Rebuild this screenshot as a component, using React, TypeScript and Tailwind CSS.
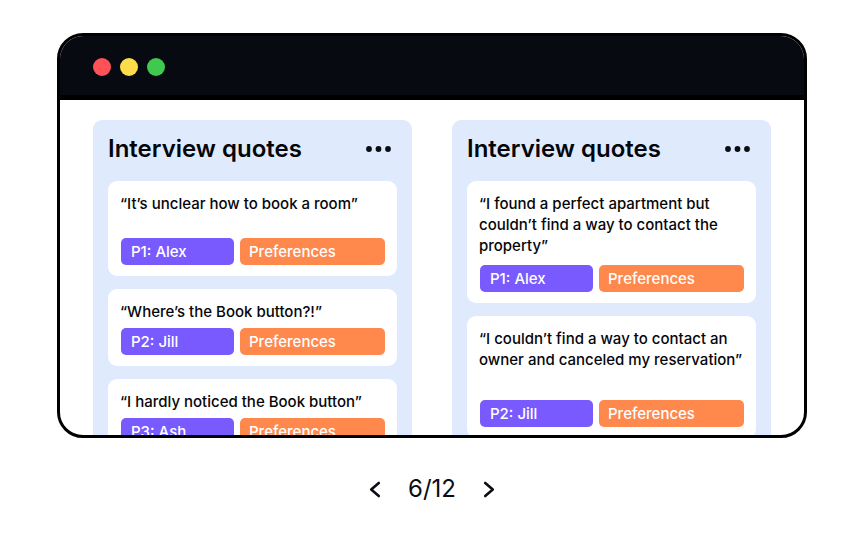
const font = { fontFamily: "Inter, 'Noto Sans', sans-serif" };

interface Quote {
  text: string;
  person: string;
  gap: string;
}

const leftQuotes: Quote[] = [
  { text: "“It’s unclear how to book a room”", person: "P1: Alex", gap: "mt-[24px]" },
  { text: "“Where’s the Book button?!”", person: "P2: Jill", gap: "mt-[6px]" },
  { text: "“I hardly noticed the Book button”", person: "P3: Ash", gap: "mt-[6px]" },
];

const rightQuotes: Quote[] = [
  {
    text: "“I found a perfect apartment but couldn’t find a way to contact the property”",
    person: "P1: Alex",
    gap: "mt-[9px]",
  },
  {
    text: "“I couldn’t find a way to contact an owner and canceled my reservation”",
    person: "P2: Jill",
    gap: "mt-[30px]",
  },
];

function Dots() {
  return (
    <svg width="25" height="6" viewBox="0 0 25 6" className="text-[#0b0d14]">
      <circle cx="3" cy="3" r="2.9" fill="currentColor" />
      <circle cx="12.5" cy="3" r="2.9" fill="currentColor" />
      <circle cx="22" cy="3" r="2.9" fill="currentColor" />
    </svg>
  );
}

function QuoteCard({ quote }: { quote: Quote }) {
  return (
    <div className="bg-white rounded-[9px] pt-[12px] pb-[11px] pl-3 pr-[10px] shrink-0">
      <p className="text-[15px] leading-[21px] font-medium text-[#05060a]">{quote.text}</p>
      <div className={`flex gap-[6px] ${quote.gap} pl-px pr-[2px]`}>
        <span className="w-[113px] h-[27px] rounded-[5px] bg-[#785aff] text-white text-[15px] font-medium leading-[27px] px-[10px]">
          {quote.person}
        </span>
        <span className="flex-1 h-[27px] rounded-[5px] bg-[#ff884d] text-white text-[15px] font-medium leading-[27px] px-[9px]">
          Preferences
        </span>
      </div>
    </div>
  );
}

function Column({ quotes }: { quotes: Quote[] }) {
  return (
    <div className="w-[319px] h-[360px] bg-[#dfebfd] rounded-[9px] px-[15px] pt-[14px] flex flex-col">
      <div className="flex items-center justify-between h-[30px] pr-[6px]">
        <h2 className="text-[24px] font-semibold text-[#05060a]">Interview quotes</h2>
        <Dots />
      </div>
      <div className="flex flex-col gap-[13px] mt-[17px]">
        {quotes.map((q) => (
          <QuoteCard key={q.text} quote={q} />
        ))}
      </div>
    </div>
  );
}

function Chevron({ dir }: { dir: "left" | "right" }) {
  return (
    <svg width="12" height="17" viewBox="0 0 12 17" fill="none" stroke="#0b0d14" strokeWidth="2.6" strokeLinecap="round" strokeLinejoin="round">
      {dir === "left" ? <path d="M9.8 2 L2.2 8.5 L9.8 15" /> : <path d="M2.2 2 L9.8 8.5 L2.2 15" />}
    </svg>
  );
}

export default function App() {
  return (
    <div className="w-[864px] h-[540px] bg-white flex flex-col items-center pt-[33px]" style={font}>
      <div className="w-[750px] h-[405px] border-[3px] border-black rounded-[26px] overflow-hidden flex flex-col bg-white">
        <div className="h-[64px] shrink-0 bg-[#080a12] border-b-[5px] border-black flex items-center gap-[9px] pl-[33px] pt-[2px]">
          <span className="w-[18px] h-[18px] rounded-full bg-[#ff5158]" />
          <span className="w-[18px] h-[18px] rounded-full bg-[#fcdc49]" />
          <span className="w-[18px] h-[18px] rounded-full bg-[#3fc94f]" />
        </div>
        <div className="flex gap-[40px] px-[33px] pt-[20px]">
          <Column quotes={leftQuotes} />
          <Column quotes={rightQuotes} />
        </div>
      </div>
      <div className="flex items-center gap-[27px] mt-[36px] h-[30px]">
        <Chevron dir="left" />
        <span className="text-[24px] text-[#0b0d14] leading-[30px]">6/12</span>
        <Chevron dir="right" />
      </div>
    </div>
  );
}
